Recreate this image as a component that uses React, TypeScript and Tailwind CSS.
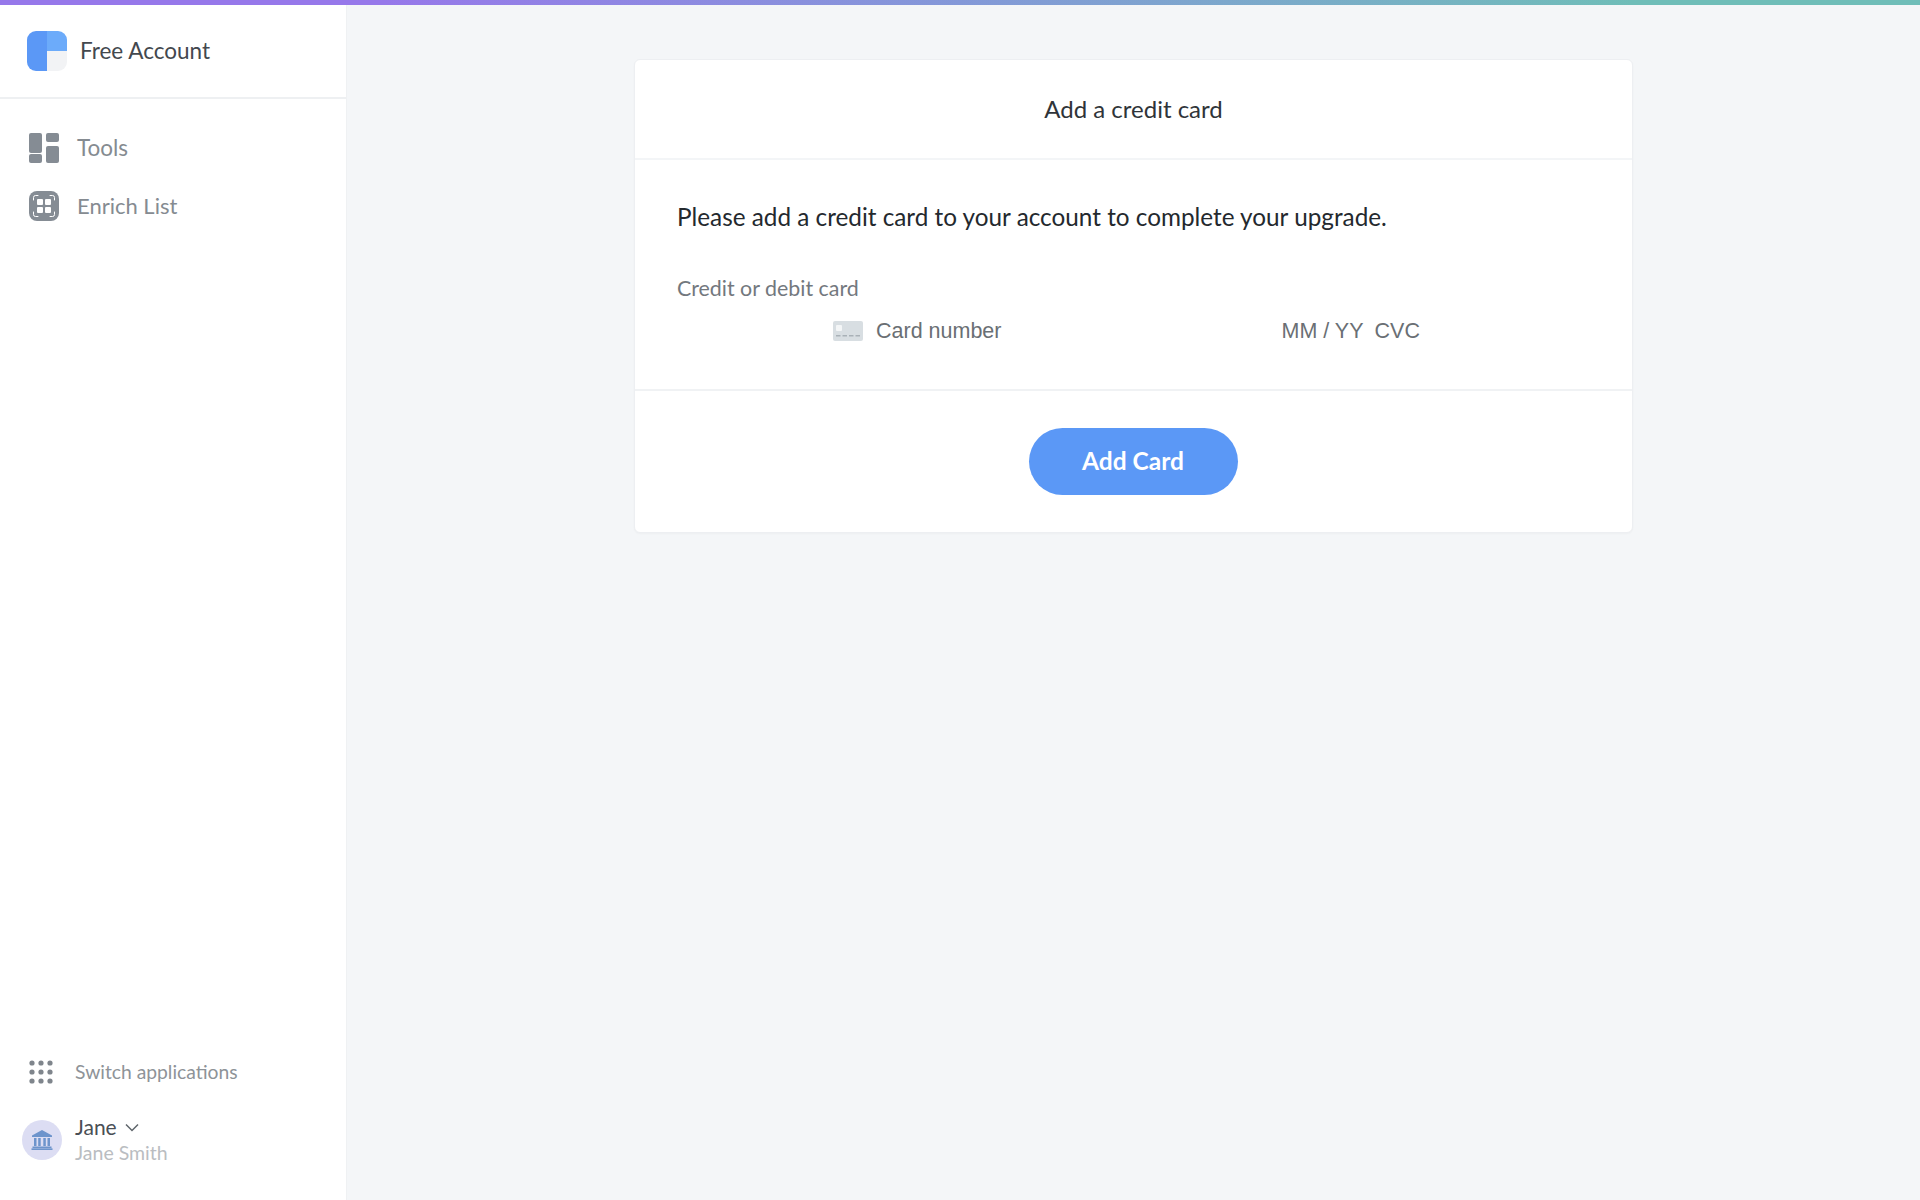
import React from "react";

function Logo() {
  return (
    <svg width="40" height="40" viewBox="0 0 40 40" className="shrink-0">
      <path d="M9 0H20V40H9A9 9 0 0 1 0 31V9A9 9 0 0 1 9 0Z" fill="#5B98F6" />
      <path d="M20 0H31A9 9 0 0 1 40 9V20H20Z" fill="#6CABFA" />
      <path d="M20 20H40V31A9 9 0 0 1 31 40H20Z" fill="#F2F3F5" />
    </svg>
  );
}

function ToolsIcon() {
  return (
    <svg width="30" height="30" viewBox="0 0 30 30" fill="#858C94" className="shrink-0">
      <rect x="0" y="0" width="13" height="20" rx="2" />
      <rect x="0" y="21" width="13" height="9" rx="2" />
      <rect x="17" y="0" width="13" height="9" rx="2" />
      <rect x="17" y="13" width="13" height="17" rx="2" />
    </svg>
  );
}

function EnrichIcon() {
  return (
    <svg width="30" height="30" viewBox="0 0 30 30" className="shrink-0">
      <rect width="30" height="30" rx="8" fill="#858C94" />
      <g fill="#FFFFFF">
        <rect x="8" y="8" width="6" height="6" rx="1" />
        <rect x="16" y="8" width="6" height="6" rx="1" />
        <rect x="8" y="16" width="6" height="6" rx="1" />
        <rect x="16" y="16" width="6" height="6" rx="1" />
      </g>
      <g fill="none" stroke="#FFFFFF" strokeWidth="1" strokeLinecap="round">
        <path d="M4.5 9V6.5A2 2 0 0 1 6.5 4.5H9" />
        <path d="M21 4.5H23.5A2 2 0 0 1 25.500 6.500V9" />
        <path d="M4.500 21V23.500A2 2 0 0 0 6.500 25.500H9" />
        <path d="M21 25.500H23.500A2 2 0 0 0 25.500 23.500V21" />
      </g>
    </svg>
  );
}

function DotsIcon() {
  const pos = [3, 12, 21];
  return (
    <svg width="24" height="24" viewBox="0 0 24 24" fill="#7F858C" className="shrink-0">
      {pos.map((y) => pos.map((x) => <circle key={`${x}-${y}`} cx={x} cy={y} r="2.6" />))}
    </svg>
  );
}

function BankIcon() {
  return (
    <div className="w-10 h-10 rounded-full bg-[#DCDDF3] flex items-center justify-center shrink-0">
      <svg width="22" height="20" viewBox="0 0 22 20" fill="#6D94CC">
        <path d="M11 0L21 5.500V7H1V5.500Z" />
        <rect x="3" y="8" width="2.500" height="8" />
        <rect x="7.200" y="8" width="2.500" height="8" />
        <rect x="12.300" y="8" width="2.500" height="8" />
        <rect x="16.500" y="8" width="2.500" height="8" />
        <rect x="1.500" y="16.500" width="19" height="1.500" />
        <rect x="0.500" y="18.300" width="21" height="1.700" />
      </svg>
    </div>
  );
}

function CardIcon() {
  return (
    <svg width="30" height="20" viewBox="0 0 30 20" className="shrink-0">
      <rect width="30" height="20" rx="2" fill="#D8DEE2" />
      <rect x="3" y="4" width="6" height="6" rx="1" fill="#F4F6F7" />
      <g fill="#A9B1B7">
        <rect x="3" y="14" width="4.500" height="1.500" />
        <rect x="9.500" y="14" width="4.500" height="1.500" />
        <rect x="16" y="14" width="4.500" height="1.500" />
        <rect x="22.500" y="14" width="4.500" height="1.500" />
      </g>
    </svg>
  );
}

export default function App() {
  return (
    <div className="h-[1200px] w-[1920px] overflow-hidden flex flex-col bg-[#F4F6F8] font-['Lato','Liberation_Sans',sans-serif]">
      <div className="h-[5px] shrink-0 bg-gradient-to-r from-[#9678EA] from-[20%] via-[#8398D8] to-[#6FBDB8] to-[85%]" />
      <div className="flex flex-1 min-h-0">
        <aside className="w-[347px] shrink-0 bg-white border-r border-[#EFF1F3] flex flex-col">
          <div className="h-[94px] shrink-0 border-b-2 border-[#EEF0F2] pl-[27px] flex items-center gap-[13px] pb-[1px]">
            <Logo />
            <span className="text-[22.500px] text-[#43484E]">Free Account</span>
          </div>
          <nav className="flex flex-col gap-[28px] pt-[34px] pl-[29px]">
            <div className="flex items-center gap-[18px]">
              <ToolsIcon />
              <span className="text-[22.500px] leading-[30px] text-[#858B91]">Tools</span>
            </div>
            <div className="flex items-center gap-[18px]">
              <EnrichIcon />
              <span className="text-[22px] leading-[30px] text-[#858B91]">Enrich List</span>
            </div>
          </nav>
          <div className="mt-auto pb-[34px]">
            <div className="flex items-center gap-[22px] pl-[29px]">
              <DotsIcon />
              <span className="text-[19.300px] leading-[27px] text-[#8E9398]">Switch applications</span>
            </div>
            <div className="flex items-center gap-[13px] pl-[22px] mt-[29px]">
              <BankIcon />
              <div className="flex flex-col">
                <div className="flex items-center gap-[8px]">
                  <span className="text-[21px] leading-[26px] text-[#4A4F55]">Jane</span>
                  <svg width="14" height="9" viewBox="0 0 14 9" fill="none" stroke="#5F656B" strokeWidth="1.500">
                    <path d="M1 1.500L7 7.500L13 1.500" />
                  </svg>
                </div>
                <span className="text-[19.500px] leading-[26px] text-[#BABDC1]">Jane Smith</span>
              </div>
            </div>
          </div>
        </aside>
        <main className="flex-1 min-w-0 pt-[54px] pl-[287px]">
          <div className="w-[999px] bg-white rounded-[6px] border border-[#EDEFF2] shadow-[0_1px_2px_rgba(0,0,0,0.03)]">
            <div className="h-[100px] border-b-2 border-[#F3F5F7] flex items-center justify-center">
              <h1 className="text-[24px] text-[#2F3439] font-normal">Add a credit card</h1>
            </div>
            <div className="h-[231px] border-b-2 border-[#F0F2F4] px-[42px] pt-[41px]">
              <p className="text-[24.300px] leading-[32px] text-[#24292E]">
                Please add a credit card to your account to complete your upgrade.
              </p>
              <div className="mt-[42px] text-[21.400px] leading-[26px] text-[#73787E]">Credit or debit card</div>
              <div className="flex items-center mt-[17px] font-['Liberation_Sans',sans-serif] text-[21.500px] leading-[26px] text-[#6A6F74]">
                <div className="ml-[156px]">
                  <CardIcon />
                </div>
                <span className="ml-[13px]">Card number</span>
                <span className="ml-[280px]">MM / YY</span>
                <span className="ml-[11px]">CVC</span>
              </div>
            </div>
            <div className="h-[141px] flex items-start justify-center pt-[37px]">
              <button className="w-[209px] h-[67px] rounded-full bg-[#5B98F6] text-white text-[24.500px] font-bold mr-[1px]">
                Add Card
              </button>
            </div>
          </div>
        </main>
      </div>
    </div>
  );
}
